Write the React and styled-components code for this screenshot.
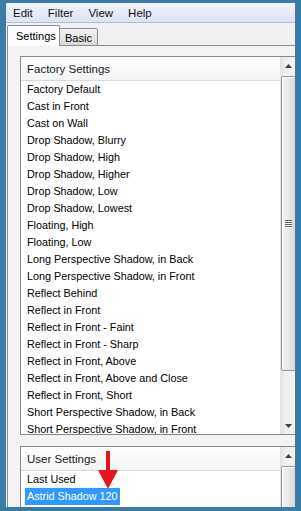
import React from 'react';
import styled, { createGlobalStyle } from 'styled-components';

// Styles

const GlobalStyle = createGlobalStyle`
  html, body {
    margin: 0;
    padding: 0;
    background: #3d7fa7;
  }
  body {
    font-family: "Liberation Sans", Arial, sans-serif;
  }
`;

const Frame = styled.div`
  box-sizing: border-box;
  width: 301px;
  height: 511px;
  border-style: solid;
  border-color: #3b7ca5;
  border-width: 3px 6px 4px 6px;
  background: #f0f0f0;
  overflow: hidden;
  display: flex;
  flex-direction: column;
  font-size: 11px;
  color: #000;
`;

const MenuBar = styled.div`
  flex: none;
  height: 19px;
  display: flex;
  align-items: center;
  gap: 15px;
  padding-left: 7px;
  background: linear-gradient(#f1f3fb, #dde2f3);
  border-bottom: 1px solid #b5bccb;
  font-size: 11.5px;
`;

const MenuItem = styled.span`
  color: #111;
`;

const TabStrip = styled.div`
  flex: none;
  height: 23px;
  display: flex;
  align-items: flex-end;
  padding-left: 1px;
  margin-bottom: -1px;
  position: relative;
  z-index: 1;
`;

const Tab = styled.div`
  box-sizing: border-box;
  width: ${(p) => (p.$active ? '53px' : '39px')};
  height: ${(p) => (p.$active ? '21px' : '18px')};
  padding-left: ${(p) => (p.$active ? '8px' : '5px')};
  padding-top: ${(p) => (p.$active ? '2px' : '1px')};
  margin-left: ${(p) => (p.$active ? '0' : '-1px')};
  border: 1px solid #898c95;
  border-bottom: ${(p) => (p.$active ? 'none' : '1px solid #898c95')};
  border-radius: 2px 2px 0 0;
  background: ${(p) =>
    p.$active ? '#fbfbfb' : 'linear-gradient(#f2f2f2, #e6e6e6 50%, #d8d8d8)'};
  font-size: 11px;
  line-height: 16px;
  position: relative;
  z-index: ${(p) => (p.$active ? 2 : 1)};
`;

const TabPanel = styled.div`
  flex: 1;
  margin-left: 1px;
  border-top: 1px solid #898c95;
  border-left: 1px solid #898c95;
  background: #f3f3f3;
  padding: 10px 0 0 12px;
  display: flex;
  flex-direction: column;
  gap: 11px;
`;

const ListBox = styled.div`
  box-sizing: border-box;
  width: 278px;
  height: ${(p) => p.$height}px;
  flex: none;
  border: 1px solid #828790;
  background: #fff;
  display: grid;
  grid-template-columns: 259px 17px;
  position: relative;
`;

const ListColumn = styled.div`
  display: flex;
  flex-direction: column;
  overflow: hidden;
`;

const GroupHeader = styled.div`
  flex: none;
  height: 23px;
  display: flex;
  align-items: center;
  padding-left: 6px;
  background: linear-gradient(#ffffff, #f3f4f6);
  border-bottom: 1px solid #d9dadd;
  font-size: 11.5px;
  color: #1a1a1a;
`;

const Row = styled.div`
  flex: none;
  height: 17px;
  display: flex;
  align-items: center;
  padding-left: 4px;
  font-size: 10.8px;
  white-space: nowrap;
`;

const RowLabel = styled.span`
  padding: 1px 2px;
  line-height: 15px;
  background: ${(p) => (p.$selected ? '#3399ff' : 'transparent')};
  color: ${(p) => (p.$selected ? '#fff' : '#000')};
`;

const ScrollBar = styled.div`
  display: flex;
  flex-direction: column;
  background: linear-gradient(to right, #e2e2e2, #efefef 30%, #f3f3f3);
  overflow: hidden;
`;

const ArrowButton = styled.div`
  flex: none;
  height: 17px;
  display: flex;
  align-items: center;
  justify-content: center;
`;

const Track = styled.div`
  flex: 1;
  padding: 2px 1px 0 1px;
`;

const Thumb = styled.div`
  box-sizing: border-box;
  height: ${(p) => p.$height}px;
  border: 1px solid #979797;
  border-radius: 2px;
  background: linear-gradient(to right, #f5f5f5, #e9e9e9 45%, #d9d9d9);
  box-shadow: inset 1px 1px 0 #fff;
  display: flex;
  align-items: center;
  justify-content: center;
`;

const RedArrow = styled.svg`
  position: absolute;
  left: 77px;
  top: 4px;
`;

// Data

const factoryItems = [
  'Factory Default',
  'Cast in Front',
  'Cast on Wall',
  'Drop Shadow, Blurry',
  'Drop Shadow, High',
  'Drop Shadow, Higher',
  'Drop Shadow, Low',
  'Drop Shadow, Lowest',
  'Floating, High',
  'Floating, Low',
  'Long Perspective Shadow, in Back',
  'Long Perspective Shadow, in Front',
  'Reflect Behind',
  'Reflect in Front',
  'Reflect in Front - Faint',
  'Reflect in Front - Sharp',
  'Reflect in Front, Above',
  'Reflect in Front, Above and Close',
  'Reflect in Front, Short',
  'Short Perspective Shadow, in Back',
  'Short Perspective Shadow, in Front',
];

// Components

function Arrow({ down }) {
  return (
    <svg width="7" height="4" viewBox="0 0 7 4">
      <polygon
        points={down ? '0,0 7,0 3.5,4' : '0,4 7,4 3.5,0'}
        fill="#3f3f3f"
      />
    </svg>
  );
}

function Grip() {
  return (
    <svg width="7" height="8" viewBox="0 0 7 8">
      {[0, 2, 4, 6].map((y) => (
        <g key={y}>
          <rect x="0" y={y} width="7" height="1" fill="#5a5a5a" />
          <rect x="0" y={y + 1} width="7" height="1" fill="#fbfbfb" />
        </g>
      ))}
    </svg>
  );
}

function Scroller({ thumb, showDown, grip }) {
  return (
    <ScrollBar>
      <ArrowButton>
        <Arrow />
      </ArrowButton>
      <Track>
        <Thumb $height={thumb}>{grip && <Grip />}</Thumb>
      </Track>
      {showDown && (
        <ArrowButton>
          <Arrow down />
        </ArrowButton>
      )}
    </ScrollBar>
  );
}

export default function App() {
  return (
    <>
      <GlobalStyle />
      <Frame>
        <MenuBar>
          <MenuItem>Edit</MenuItem>
          <MenuItem>Filter</MenuItem>
          <MenuItem>View</MenuItem>
          <MenuItem>Help</MenuItem>
        </MenuBar>
        <TabStrip>
          <Tab $active>Settings</Tab>
          <Tab>Basic</Tab>
        </TabStrip>
        <TabPanel>
          <ListBox $height={379}>
            <ListColumn>
              <GroupHeader>Factory Settings</GroupHeader>
              {factoryItems.map((item) => (
                <Row key={item}>
                  <RowLabel>{item}</RowLabel>
                </Row>
              ))}
            </ListColumn>
            <Scroller thumb={295} showDown grip />
          </ListBox>
          <ListBox $height={80}>
            <ListColumn>
              <GroupHeader>User Settings</GroupHeader>
              <Row>
                <RowLabel>Last Used</RowLabel>
              </Row>
              <Row>
                <RowLabel $selected>Astrid Shadow 120</RowLabel>
              </Row>
            </ListColumn>
            <Scroller thumb={120} />
            <RedArrow width="20" height="38" viewBox="0 0 20 38">
              <rect x="8" y="0" width="4" height="20" fill="#e8141b" />
              <polygon points="0,19 20,19 10,38" fill="#e8141b" />
            </RedArrow>
          </ListBox>
        </TabPanel>
      </Frame>
    </>
  );
}
